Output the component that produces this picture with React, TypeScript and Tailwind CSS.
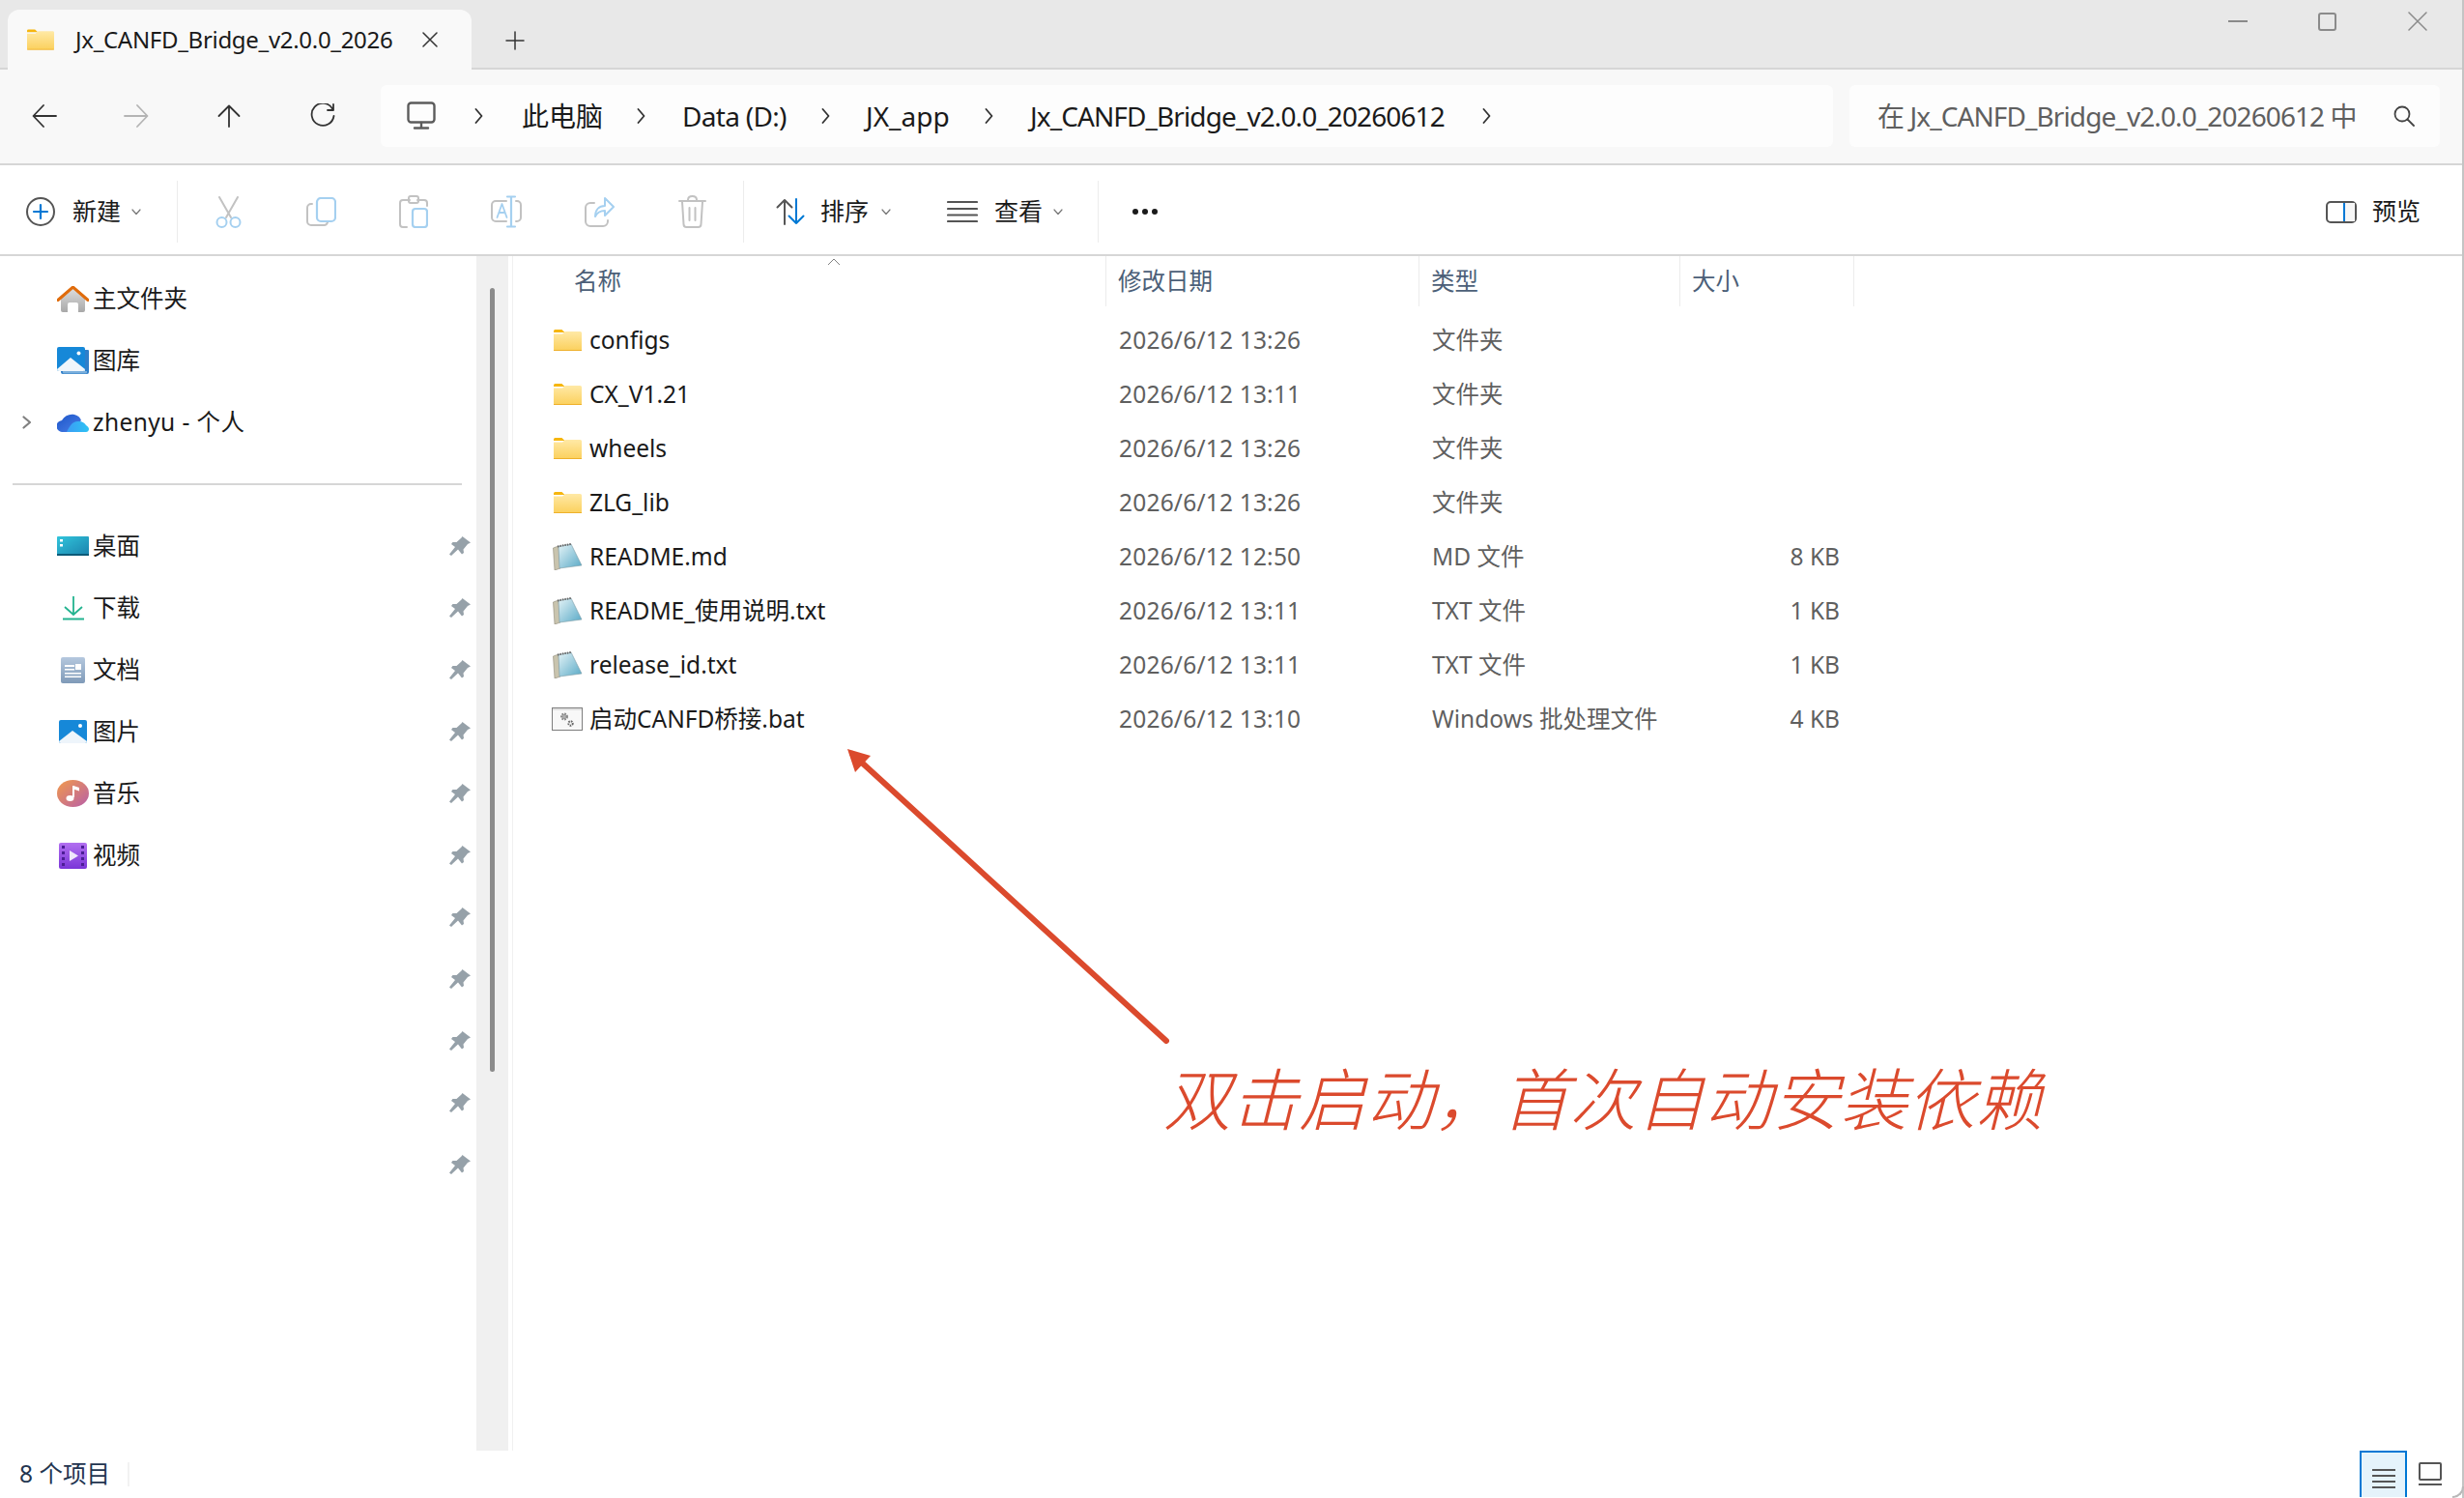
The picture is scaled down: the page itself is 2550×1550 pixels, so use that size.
import type { ReactNode } from 'react';

const FONT = "font-['Noto_Sans','Noto_Sans_CJK_SC',sans-serif]";

function Folder({ className }: { className: string }) {
	return (
		<svg viewBox="0 0 29 22" className={className}>
			<defs>
				<linearGradient id="folderBody" x1="0" y1="0" x2="0" y2="1">
					<stop offset="0" stopColor="#ffe9a6" />
					<stop offset="1" stopColor="#fbd05c" />
				</linearGradient>
			</defs>
			<path d="M0 1.500A1.500 1.500 0 0 1 1.500 0h7l3 3H0z" fill="#f6b60f" />
			<path d="M0 4.500h9l3-2.500h15.500A1.500 1.500 0 0 1 29 3.500V20.500A1.500 1.500 0 0 1 27.500 22H1.500A1.500 1.500 0 0 1 0 20.500z" fill="url(#folderBody)" />
			<path d="M0 21h29v.5a.5.5 0 0 1-.5.5H.5a.5.5 0 0 1-.5-.5z" fill="#eeb02a" />
		</svg>
	);
}

function Notepad() {
	return (
		<svg viewBox="0 0 31 28" className="w-[31px] h-[28px]">
			<defs>
				<linearGradient id="notepadPage" x1="0" y1="0" x2="1" y2="1">
					<stop offset="0" stopColor="#e4f3f7" />
					<stop offset="1" stopColor="#58a9c6" />
				</linearGradient>
			</defs>
			<path d="M0.500 5L6 3l2 23-6 2z" fill="#c9c4ae" stroke="#8f8a78" strokeWidth="0.600" />
			<path d="M6 3.500L19 1l11 22-23 3z" fill="url(#notepadPage)" stroke="#7c9aa5" strokeWidth="0.600" />
			<path d="M5 3.500L19.500 0.800" stroke="#666" strokeWidth="2" strokeDasharray="1.500 1" />
		</svg>
	);
}

function BatFile() {
	return (
		<svg viewBox="0 0 32 24" className="w-[32px] h-[24px]">
			<rect x="0.500" y="0.500" width="31" height="23" fill="#f8f8f8" stroke="#7e7e7e" />
			<rect x="1" y="1" width="30" height="2" fill="#e2e2e2" />
			<circle cx="13" cy="9.500" r="2.800" fill="#b0b0b0" stroke="#8a8a8a" strokeWidth="2.400" strokeDasharray="1.600 1" />
			<circle cx="19.500" cy="16.500" r="2.200" fill="#f8f8f8" stroke="#666" strokeWidth="2" strokeDasharray="1.500 0.900" />
		</svg>
	);
}

function Pin() {
	return (
		<svg viewBox="0 0 22 20" className="w-[22px] h-[20px]">
			<path d="M13.500 0L22 6.500l-3 1.500-4.500 5.500.5 3.500-2 1.500-4-5-7 6.500-2-1.500 6-7.500-4-3 1.500-2 4 0 5-4.500z" fill="#96a1a9" />
		</svg>
	);
}

function NavIcon({ name }: { name: string }) {
	if (name === 'home') {
		return (
			<svg viewBox="0 0 33 27" className="w-[33px] h-[27px]">
				<defs>
					<linearGradient id="homeWall" x1="0" y1="0" x2="0" y2="1">
						<stop offset="0" stopColor="#dcdcdc" />
						<stop offset="1" stopColor="#a8a8a8" />
					</linearGradient>
				</defs>
				<path d="M4 12L16.500 3 29 12v13a2 2 0 0 1-2 2h-5v-8a2 2 0 0 0-2-2h-7a2 2 0 0 0-2 2v8H6a2 2 0 0 1-2-2z" fill="url(#homeWall)" />
				<path d="M1 14.500L16.500 1 32 14.500" fill="none" stroke="#e06c0c" strokeWidth="3" strokeLinecap="round" strokeLinejoin="round" />
			</svg>
		);
	}
	if (name === 'gallery') {
		return (
			<svg viewBox="0 0 33 28" className="w-[33px] h-[28px]">
				<path d="M29 3h3a1 1 0 0 1 1 1v22a2 2 0 0 1-2 2H6a2 2 0 0 1-2-2v-1h25z" fill="#2f7fc9" />
				<path d="M6 25h25v1.500a1 1 0 0 1-1 1H7a1 1 0 0 1-1-1z" fill="#79aedc" />
				<rect width="29" height="25" rx="2" fill="#1688d8" />
				<path d="M0 23L14 11l15 12v0a2 2 0 0 1-2 2H2a2 2 0 0 1-2-2z" fill="#eef5fb" />
				<circle cx="22.500" cy="6.500" r="2" fill="#fff" />
			</svg>
		);
	}
	if (name === 'cloud') {
		return (
			<svg viewBox="0 0 33 19" className="w-[33px] h-[19px]">
				<defs>
					<linearGradient id="cloudBack" x1="0" y1="0" x2="1" y2="1">
						<stop offset="0" stopColor="#1c55c8" />
						<stop offset="1" stopColor="#4a7fe8" />
					</linearGradient>
					<linearGradient id="cloudFront" x1="0" y1="0" x2="1" y2="0">
						<stop offset="0" stopColor="#3b9cf5" />
						<stop offset="1" stopColor="#2ec3f4" />
					</linearGradient>
				</defs>
				<path d="M6 19A6 6 0 0 1 5 7C8 2 13 0 18 1c4 1 6 3 7 6L14 19z" fill="url(#cloudBack)" />
				<path d="M10 19c3-6 6-12 13-11 3 0 6 2 7 4 2 1 3 3 3 4s-1 3-3 3z" fill="url(#cloudFront)" />
			</svg>
		);
	}
	if (name === 'desktop') {
		return (
			<svg viewBox="0 0 33 20" className="w-[33px] h-[20px]">
				<defs>
					<linearGradient id="deskScreen" x1="0" y1="0" x2="1" y2="1">
						<stop offset="0" stopColor="#31c5dc" />
						<stop offset="1" stopColor="#1b83ad" />
					</linearGradient>
				</defs>
				<rect width="33" height="19" rx="1" fill="url(#deskScreen)" />
				<rect y="18" width="33" height="2" fill="#0c5a78" />
				<rect x="3" y="3" width="3" height="2.500" fill="#fff" />
				<rect x="3" y="8" width="3" height="2.500" fill="#fff" />
			</svg>
		);
	}
	if (name === 'download') {
		return (
			<svg viewBox="0 0 24 25" className="w-[24px] h-[25px]">
				<path d="M12 0v18M3 11l9 8 9-8M1 23.500h22" fill="none" stroke="#23b38f" strokeWidth="1.800" />
			</svg>
		);
	}
	if (name === 'docs') {
		return (
			<svg viewBox="0 0 25 27" className="w-[25px] h-[27px]">
				<defs>
					<linearGradient id="docsPage" x1="0" y1="0" x2="0" y2="1">
						<stop offset="0" stopColor="#b5c8de" />
						<stop offset="1" stopColor="#7f9ab8" />
					</linearGradient>
				</defs>
				<rect width="25" height="27" rx="2" fill="url(#docsPage)" />
				<path d="M4 8h10v2H4zM4 12h10v1.500H4zM4 16h17v1.500H4zM4 19.500h17V21H4z" fill="#fff" />
				<rect x="15" y="7" width="6" height="6" fill="#fff" />
			</svg>
		);
	}
	if (name === 'pictures') {
		return (
			<svg viewBox="0 0 29 24" className="w-[29px] h-[24px]">
				<rect width="29" height="24" rx="2" fill="#1688d8" />
				<path d="M0 22L14 11l15 11a2 2 0 0 1-2 2H2a2 2 0 0 1-2-2z" fill="#eef5fb" />
				<circle cx="22" cy="6" r="2" fill="#fff" />
			</svg>
		);
	}
	if (name === 'music') {
		return (
			<svg viewBox="0 0 33 28" className="w-[33px] h-[28px]">
				<defs>
					<linearGradient id="musicDisc" x1="0" y1="0" x2="1" y2="1">
						<stop offset="0" stopColor="#f29a4a" />
						<stop offset="1" stopColor="#b85fa8" />
					</linearGradient>
				</defs>
				<ellipse cx="16.500" cy="14" rx="16.500" ry="14" fill="url(#musicDisc)" />
				<path d="M17 6v12" stroke="#fff" strokeWidth="2" />
				<path d="M17 6l6 2v3.500l-6-2z" fill="#fff" />
				<ellipse cx="13.500" cy="19" rx="4" ry="3" fill="#fff" />
			</svg>
		);
	}
	return (
		<svg viewBox="0 0 29 27" className="w-[29px] h-[27px]">
			<defs>
				<linearGradient id="videoFilm" x1="0" y1="0" x2="0" y2="1">
					<stop offset="0" stopColor="#b26ff0" />
					<stop offset="1" stopColor="#7a35d8" />
				</linearGradient>
			</defs>
			<rect width="29" height="27" rx="2" fill="url(#videoFilm)" />
			<path d="M3 3h3v3H3zM3 9h3v3H3zM3 15h3v3H3zM3 21h3v3H3zM23 3h3v3h-3zM23 9h3v3h-3zM23 15h3v3h-3zM23 21h3v3h-3z" fill="#4c1d95" />
			<path d="M11 8l9 5.500-9 5.500z" fill="#efe6fb" />
		</svg>
	);
}

function Stroke({ w, h, vb, children, className = '' }: { w: string; h: string; vb: string; children: ReactNode; className?: string }) {
	return (
		<svg viewBox={vb} className={`${w} ${h} ${className}`} fill="none" strokeLinecap="round" strokeLinejoin="round">
			{children}
		</svg>
	);
}

const GREY = '#c2c2c2';
const SOFTBLUE = '#a5d0f0';

function Chevron({ className = '' }: { className?: string }) {
	return (
		<Stroke w="w-[9px]" h="h-[16px]" vb="0 0 9 16" className={className}>
			<path d="M1.500 1l6 7-6 7" stroke="#333" strokeWidth="1.800" />
		</Stroke>
	);
}

function SmallDown() {
	return (
		<Stroke w="w-[10px]" h="h-[7px]" vb="0 0 10 7">
			<path d="M1 1l4 4.500L9 1" stroke="#777" strokeWidth="1.200" />
		</Stroke>
	);
}

function Separator({ className = '' }: { className?: string }) {
	return <div className={`w-[1px] h-[64px] bg-[#ececec] shrink-0 ${className}`} />;
}

function ToolSlot({ children }: { children: ReactNode }) {
	return <div className="w-[96px] flex justify-center items-center shrink-0">{children}</div>;
}

function TitleBar() {
	return (
		<div className="h-[72px] bg-[#e8e8e8] flex items-end border-b-2 border-[#d6d6d6]">
			<div className="ml-[8px] w-[480px] h-[62px] -mb-[2px] bg-[#f9f9f9] rounded-t-[12px] flex items-center pl-[20px]">
				<Folder className="w-[28px] h-[22px] shrink-0" />
				<span className="ml-[22px] text-[24px] tracking-[-0.3px] text-[#1a1a1a] w-[327px] whitespace-nowrap">Jx_CANFD_Bridge_v2.0.0_2026</span>
				<Stroke w="w-[16px]" h="h-[16px]" vb="0 0 16 16" className="ml-[32px]">
					<path d="M1 1l14 14M15 1L1 15" stroke="#333" strokeWidth="1.500" />
				</Stroke>
			</div>
			<div className="ml-[35px] h-[60px] flex items-center pt-[3px]">
				<Stroke w="w-[20px]" h="h-[20px]" vb="0 0 20 20">
					<path d="M10 1v18M1 10h18" stroke="#333" strokeWidth="1.500" />
				</Stroke>
			</div>
			<div className="ml-auto self-start flex items-center h-[44px] pr-[38px]">
				<div className="w-[20px] h-[2px] bg-[#8a8a8a]" />
				<div className="ml-[73px] w-[19px] h-[19px] border-2 border-[#8a8a8a] rounded-[3px]" />
				<Stroke w="w-[20px]" h="h-[20px]" vb="0 0 20 20" className="ml-[74px]">
					<path d="M1 1l18 18M19 1L1 19" stroke="#8a8a8a" strokeWidth="1.500" />
				</Stroke>
			</div>
		</div>
	);
}

function AddressBar() {
	return (
		<div className="h-[99px] bg-[#f8f8f8] border-b-2 border-[#d6d6d6] flex items-center pb-[2px]">
			<Stroke w="w-[26px]" h="h-[24px]" vb="0 0 26 24" className="ml-[33px]">
				<path d="M25 12H2M12 1L1.500 12 12 23" stroke="#333" strokeWidth="1.800" />
			</Stroke>
			<Stroke w="w-[26px]" h="h-[24px]" vb="0 0 26 24" className="ml-[69px]">
				<path d="M1 12h23M14 1l10.500 11L14 23" stroke="#b4b4b4" strokeWidth="1.800" />
			</Stroke>
			<Stroke w="w-[24px]" h="h-[24px]" vb="0 0 24 24" className="ml-[71px]">
				<path d="M12 23V2M1.500 12L12 1.500 22.500 12" stroke="#333" strokeWidth="1.800" />
			</Stroke>
			<Stroke w="w-[26px]" h="h-[25px]" vb="0 0 26 25" className="ml-[72px]">
				<path d="M23 5.500A11.500 11.500 0 1 0 24.500 13M24 1v6h-6" stroke="#333" strokeWidth="1.800" />
			</Stroke>
			<div className="ml-[47px] w-[1503px] h-[64px] bg-[#fdfdfd] rounded-[6px] flex items-center text-[28px] text-[#1a1a1a] whitespace-nowrap">
				<Stroke w="w-[30px]" h="h-[29px]" vb="0 0 30 29" className="ml-[27px]">
					<rect x="1.500" y="1.500" width="27" height="20" rx="3" stroke="#5c5c5c" strokeWidth="2.400" />
					<path d="M15 22v5M8 27.500h14" stroke="#5c5c5c" strokeWidth="2.400" />
				</Stroke>
				<Chevron className="ml-[40px]" />
				<span className="ml-[40px] w-[85px]">此电脑</span>
				<Chevron className="ml-[34px]" />
				<span className="ml-[38px] w-[109px] tracking-[-0.7px]">Data (D:)</span>
				<Chevron className="ml-[35px]" />
				<span className="ml-[37px] w-[86px]">JX_app</span>
				<Chevron className="ml-[37px]" />
				<span className="ml-[38px] w-[431px] tracking-[-0.9px]">Jx_CANFD_Bridge_v2.0.0_20260612</span>
				<Chevron className="ml-[37px]" />
			</div>
			<div className="ml-[17px] w-[611px] h-[64px] bg-[#fdfdfd] rounded-[6px] flex items-center text-[28px] text-[#5f5f5f] whitespace-nowrap">
				<span className="ml-[29px] w-[495px] overflow-hidden tracking-[-0.9px]">在 Jx_CANFD_Bridge_v2.0.0_20260612 中</span>
				<Stroke w="w-[22px]" h="h-[22px]" vb="0 0 22 22" className="ml-[39px]">
					<circle cx="9" cy="9" r="7.500" stroke="#444" strokeWidth="1.800" />
					<path d="M14.500 14.500L21 21" stroke="#444" strokeWidth="1.800" />
				</Stroke>
			</div>
		</div>
	);
}

function Toolbar() {
	return (
		<div className="h-[94px] bg-white border-b-2 border-[#d6d6d6] flex items-center text-[25px] text-[#1a1a1a] whitespace-nowrap pt-[4px]">
			<Stroke w="w-[30px]" h="h-[30px]" vb="0 0 30 30" className="ml-[27px]">
				<circle cx="15" cy="15" r="14" stroke="#555" strokeWidth="2" />
				<path d="M15 8v14M8 15h14" stroke="#0078d4" strokeWidth="2.200" />
			</Stroke>
			<span className="ml-[18px] w-[50px]">新建</span>
			<span className="ml-[11px]"><SmallDown /></span>
			<Separator className="ml-[37px]" />
			<div className="ml-[4px] flex">
				<ToolSlot>
					<Stroke w="w-[29px]" h="h-[33px]" vb="0 0 29 33">
						<path d="M5 1l12 21M24 1L12 22" stroke={GREY} strokeWidth="2" />
						<circle cx="7.500" cy="27" r="5" stroke={SOFTBLUE} strokeWidth="2" />
						<circle cx="21.500" cy="27" r="5" stroke={SOFTBLUE} strokeWidth="2" />
					</Stroke>
				</ToolSlot>
				<ToolSlot>
					<Stroke w="w-[31px]" h="h-[30px]" vb="0 0 31 30">
						<path d="M6 7H5a4 4 0 0 0-4 4v14a4 4 0 0 0 4 4h13a4 4 0 0 0 4-3" stroke={GREY} strokeWidth="2" />
						<rect x="11" y="1" width="19" height="24" rx="4" stroke={SOFTBLUE} strokeWidth="2.200" />
					</Stroke>
				</ToolSlot>
				<ToolSlot>
					<Stroke w="w-[30px]" h="h-[34px]" vb="0 0 30 34">
						<path d="M11 5H4a3 3 0 0 0-3 3v22a3 3 0 0 0 3 3h4M19 5h7a3 3 0 0 1 3 3v3" stroke={GREY} strokeWidth="2" />
						<rect x="10" y="1" width="10" height="7" rx="2" stroke={GREY} strokeWidth="2" />
						<rect x="14" y="14" width="15" height="19" rx="3" stroke={SOFTBLUE} strokeWidth="2.200" />
					</Stroke>
				</ToolSlot>
				<ToolSlot>
					<Stroke w="w-[32px]" h="h-[34px]" vb="0 0 32 34">
						<path d="M16 6H5a4 4 0 0 0-4 4v13a4 4 0 0 0 4 4h11M26 6h1a4 4 0 0 1 4 4v13a4 4 0 0 1-4 4h-1" stroke={GREY} strokeWidth="2" />
						<path d="M21 2v30M17 1.500h8M17 32.500h8" stroke={SOFTBLUE} strokeWidth="2.200" />
						<path d="M6.500 23l5-14 5 14M8.500 18h6" stroke={SOFTBLUE} strokeWidth="1.800" />
					</Stroke>
				</ToolSlot>
				<ToolSlot>
					<Stroke w="w-[31px]" h="h-[31px]" vb="0 0 31 31">
						<path d="M10 6H6a5 5 0 0 0-5 5v14a5 5 0 0 0 5 5h13a5 5 0 0 0 5-5v-1" stroke={GREY} strokeWidth="2" />
						<path d="M21 1l9 9-9 9v-5c-5 0-8 2-10 6 0-7 4-11 10-11z" stroke={SOFTBLUE} strokeWidth="2" />
					</Stroke>
				</ToolSlot>
				<ToolSlot>
					<Stroke w="w-[29px]" h="h-[34px]" vb="0 0 29 34">
						<path d="M1 6h27M10 5c0-3 2-4 4.500-4S19 2 19 5M4 7l1.500 23a3 3 0 0 0 3 3h12a3 3 0 0 0 3-3L25 7M11.500 13v13M17.500 13v13" stroke={GREY} strokeWidth="2" />
					</Stroke>
				</ToolSlot>
			</div>
			<Separator className="ml-[5px]" />
			<Stroke w="w-[30px]" h="h-[28px]" vb="0 0 30 28" className="ml-[33px]">
				<path d="M9 27V2M1.500 9.500L9 2l7.500 7.500" stroke="#555" strokeWidth="2" />
				<path d="M21 1v25M13.500 18.500L21 26l7.500-7.500" stroke="#0078d4" strokeWidth="2" />
			</Stroke>
			<span className="ml-[16px] w-[50px]">排序</span>
			<span className="ml-[13px]"><SmallDown /></span>
			<Stroke w="w-[32px]" h="h-[24px]" vb="0 0 32 24" className="ml-[58px]">
				<path d="M1 2h30M1 9h30M1 15.500h30M1 22h30" stroke="#555" strokeWidth="2.200" />
			</Stroke>
			<span className="ml-[17px] w-[50px]">查看</span>
			<span className="ml-[11px]"><SmallDown /></span>
			<Separator className="ml-[36px]" />
			<div className="ml-[35px] flex gap-[4px]">
				<div className="w-[6px] h-[6px] rounded-full bg-[#1a1a1a]" />
				<div className="w-[6px] h-[6px] rounded-full bg-[#1a1a1a]" />
				<div className="w-[6px] h-[6px] rounded-full bg-[#1a1a1a]" />
			</div>
			<div className="ml-auto flex items-center pr-[45px]">
				<div className="w-[32px] h-[23px] border-2 border-[#555] rounded-[5px] flex justify-end">
					<div className="w-[12px] h-full border-l-2 border-[#0078d4] bg-[#f6f6f6]" />
				</div>
				<span className="ml-[16px]">预览</span>
			</div>
		</div>
	);
}

const NAV_TOP = [
	{ icon: 'home', label: '主文件夹' },
	{ icon: 'gallery', label: '图库' },
	{ icon: 'cloud', label: 'zhenyu - 个人', expand: true },
];

const NAV_PINNED = [
	{ icon: 'desktop', label: '桌面' },
	{ icon: 'download', label: '下载' },
	{ icon: 'docs', label: '文档' },
	{ icon: 'pictures', label: '图片' },
	{ icon: 'music', label: '音乐' },
	{ icon: 'video', label: '视频' },
	{ icon: '', label: '' },
	{ icon: '', label: '' },
	{ icon: '', label: '' },
	{ icon: '', label: '' },
	{ icon: '', label: '' },
];

function Sidebar() {
	return (
		<div className="w-[493px] pt-[12px] shrink-0 text-[24.500px] text-[#1a1a1a]">
			{NAV_TOP.map((item) => (
				<div key={item.label} className="h-[64px] flex items-center">
					<div className="w-[59px] flex justify-start pl-[23px]">
						{item.expand && (
							<Stroke w="w-[10px]" h="h-[14px]" vb="0 0 10 14">
								<path d="M1.500 1.500L8 7l-6.500 5.500" stroke="#808080" strokeWidth="2.200" />
							</Stroke>
						)}
					</div>
					<div className="w-[33px] flex justify-center">
						<NavIcon name={item.icon} />
					</div>
					<span className={`ml-[4px] ${item.expand ? 'tracking-[0.4px]' : ''}`}>{item.label}</span>
				</div>
			))}
			<div className="h-[64px] flex items-center pl-[13px]">
				<div className="w-[465px] h-[2px] bg-[#d6d6d6]" />
			</div>
			{NAV_PINNED.map((item, i) => (
				<div key={i} className="h-[64px] flex items-center pr-[6px]">
					<div className="w-[59px]" />
					<div className="w-[33px] flex justify-center">{item.icon && <NavIcon name={item.icon} />}</div>
					<span className="ml-[4px]">{item.label}</span>
					<div className="ml-auto">
						<Pin />
					</div>
				</div>
			))}
		</div>
	);
}

const FILES = [
	{ icon: 'folder', name: 'configs', date: '2026/6/12 13:26', type: '文件夹', size: '' },
	{ icon: 'folder', name: 'CX_V1.21', date: '2026/6/12 13:11', type: '文件夹', size: '' },
	{ icon: 'folder', name: 'wheels', date: '2026/6/12 13:26', type: '文件夹', size: '' },
	{ icon: 'folder', name: 'ZLG_lib', date: '2026/6/12 13:26', type: '文件夹', size: '' },
	{ icon: 'note', name: 'README.md', date: '2026/6/12 12:50', type: 'MD 文件', size: '8 KB' },
	{ icon: 'note', name: 'README_使用说明.txt', date: '2026/6/12 13:11', type: 'TXT 文件', size: '1 KB' },
	{ icon: 'note', name: 'release_id.txt', date: '2026/6/12 13:11', type: 'TXT 文件', size: '1 KB' },
	{ icon: 'bat', name: '启动CANFD桥接.bat', date: '2026/6/12 13:10', type: 'Windows 批处理文件', size: '4 KB' },
];

function FileList() {
	return (
		<div className="flex-1 relative text-[24.500px] whitespace-nowrap">
			<div className="h-[52px] flex text-[#4c5f78]">
				<div className="w-[614px] pl-[63px] pt-[8px] border-r border-[#ececec]">名称</div>
				<div className="w-[324px] pl-[12px] pt-[8px] border-r border-[#ececec]">修改日期</div>
				<div className="w-[270px] pl-[12px] pt-[8px] border-r border-[#ececec]">类型</div>
				<div className="w-[180px] pl-[12px] pt-[8px] border-r border-[#ececec]">大小</div>
			</div>
			<svg viewBox="0 0 14 8" className="absolute left-[325px] top-[2px] w-[14px] h-[8px]" fill="none">
				<path d="M1 7l6-6 6 6" stroke="#808080" strokeWidth="1" />
			</svg>
			<div className="pt-[7px]">
				{FILES.map((f) => (
					<div key={f.name} className="h-[56px] flex items-center text-[#5f5f5f]">
						<div className="w-[614px] flex items-center pl-[40px] text-[#1a1a1a]">
							<div className="w-[32px] flex justify-center">
								{f.icon === 'folder' && <Folder className="w-[29px] h-[22px]" />}
								{f.icon === 'note' && <Notepad />}
								{f.icon === 'bat' && <BatFile />}
							</div>
							<span className="ml-[7px]">{f.name}</span>
						</div>
						<div className="w-[324px] pl-[13px] tracking-[0.2px]">{f.date}</div>
						<div className="w-[270px] pl-[13px]">{f.type}</div>
						<div className="w-[165px] text-right">{f.size}</div>
					</div>
				))}
			</div>
		</div>
	);
}

function StatusBar() {
	return (
		<div className="h-[48px] flex items-stretch bg-white">
			<div className="flex items-center pl-[20px] text-[24.500px] text-[#22344f]">
				<span className="w-[112px] whitespace-nowrap">8 个项目</span>
				<div className="w-[2px] h-[25px] bg-[#f2f2f2]" />
			</div>
			<div className="ml-auto flex items-stretch">
				<div className="w-[49px] border-2 border-b-0 border-[#0078d4] bg-[#e5f3fb] flex flex-col justify-center gap-[4px] items-center pt-[8px]">
					<div className="w-[24px] h-[2px] bg-[#555]" />
					<div className="w-[24px] h-[2px] bg-[#555]" />
					<div className="w-[24px] h-[2px] bg-[#555]" />
					<div className="w-[24px] h-[2px] bg-[#555]" />
				</div>
				<div className="w-[36px] pl-[12px] pt-[12px] mr-[23px]">
					<div className="w-[24px] h-[19px] border-2 border-[#555] rounded-[2px]" />
					<div className="w-[24px] h-[2px] bg-[#555] mt-[3px]" />
				</div>
			</div>
		</div>
	);
}

export default function App() {
	return (
		<div className={`relative w-[2550px] h-[1550px] overflow-hidden bg-white flex flex-col ${FONT}`}>
			<TitleBar />
			<AddressBar />
			<Toolbar />
			<div className="h-[1236px] flex">
				<Sidebar />
				{/* 스크롤 트랙 */}
				<div className="w-[33px] h-full bg-[#f0f0f0] shrink-0 pt-[33px] pl-[14px]">
					<div className="w-[5px] h-[811px] rounded-[3px] bg-[#8b8b8b]" />
				</div>
				<div className="w-[4px]" />
				<div className="w-[1px] h-full bg-[#f0f0f0]" />
				<FileList />
			</div>
			<StatusBar />

			{/* 창 오른쪽 테두리 */}
			<div className="absolute right-0 top-0 bottom-0 w-[2px] bg-[#c4c4c4]" />
			<div className="absolute right-0 bottom-0 w-[12px] h-[12px] border-r-2 border-b-2 border-[#b8b8b8] rounded-br-[12px]" />

			{/* 빨간 화살표 주석 */}
			<svg viewBox="0 0 2550 1550" className="absolute inset-0 w-[2550px] h-[1550px] pointer-events-none">
				<path d="M1207 1077L882 780" stroke="#db4a2d" strokeWidth="6" strokeLinecap="round" />
				<path d="M877 775L901 782 885 799z" fill="#db4a2d" />
			</svg>
			<div className="absolute left-[1204px] top-[1087px] text-[70px] leading-[94px] italic font-light text-[#db4a2d] whitespace-nowrap font-['Noto_Sans_CJK_SC',sans-serif]">
				双击启动，首次自动安装依赖
			</div>
		</div>
	);
}
